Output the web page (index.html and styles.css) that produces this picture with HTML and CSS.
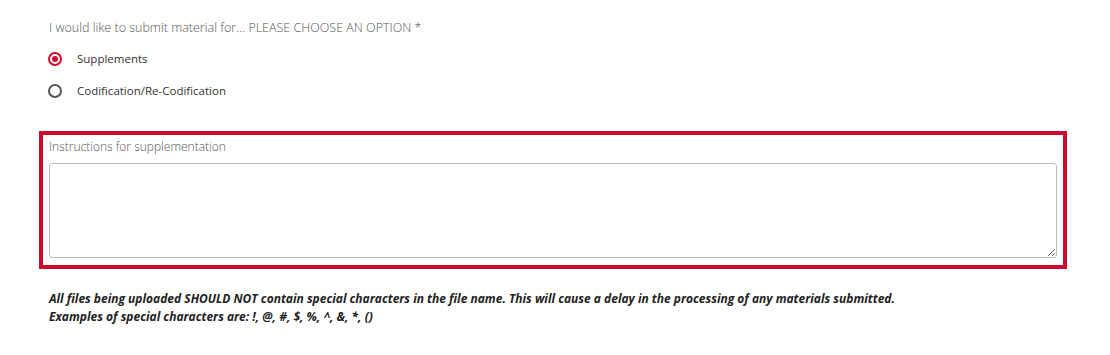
FILE: index.html
```html
<!DOCTYPE html>
<html lang="en">
<head>
<meta charset="utf-8">
<title>Submit material</title>
<link rel="stylesheet" href="styles.css">
</head>
<body>
<form class="form">
  <div class="question" role="radiogroup" aria-labelledby="q-title">
    <div class="question-title" id="q-title">I would like to submit material for... PLEASE CHOOSE AN OPTION *</div>
    <label class="option">
      <input class="radio" type="radio" name="material" checked>
      <span class="option-text">Supplements</span>
    </label>
    <label class="option">
      <input class="radio" type="radio" name="material">
      <span class="option-text">Codification/Re-Codification</span>
    </label>
  </div>
  <div class="field highlighted">
    <label class="field-label" for="instr">Instructions for supplementation</label>
    <textarea id="instr" class="textarea"></textarea>
  </div>
  <p class="notice">All files being uploaded SHOULD NOT contain special characters in the file name. This will cause a delay in the processing of any materials submitted.<br>Examples of special characters are: !, @, #, $, %, ^, &amp;, *, ()</p>
</form>
</body>
</html>
```

FILE: styles.css
```css
html, body {
  margin: 0;
  padding: 0;
  background: #ffffff;
}

body {
  font-family: "Open Sans", "Noto Sans", sans-serif;
  color: #333333;
}

.form {
  margin: 0 43px 0 39px;
  padding-top: 18px;
}

.question {
  padding: 0 10px;
}

.question-title {
  margin-bottom: 5px;
  font-size: 12.5px;
  font-weight: 300;
  line-height: 20px;
  color: #555555;
}

.option {
  display: flex;
  align-items: center;
  height: 32px;
}

.radio {
  appearance: none;
  -webkit-appearance: none;
  box-sizing: border-box;
  width: 14px;
  height: 14px;
  margin: 0 0 0 -1px;
  border: 2px solid #555555;
  border-radius: 50%;
  display: grid;
  place-items: center;
  flex: none;
}

.radio:checked {
  border-color: #cf0a2c;
}

.radio:checked::after {
  content: "";
  width: 6px;
  height: 6px;
  border-radius: 50%;
  background: #cf0a2c;
}

.option-text {
  margin-left: 15px;
  font-size: 11.5px;
  line-height: 20px;
  color: #333333;
}

.field {
  margin-top: 24px;
  display: flex;
  flex-direction: column;
}

.highlighted {
  border: 4px solid #cf0a2c;
  padding: 2px 6px 7px 6px;
}

.field-label {
  font-size: 12px;
  font-weight: 300;
  line-height: 20px;
  color: #555555;
}

.textarea {
  margin-top: 6px;
  box-sizing: border-box;
  height: 95px;
  border: 1px solid #bbbbbb;
  border-radius: 3px;
  font-family: inherit;
  font-size: 12px;
}

.notice {
  margin: 21px 0 0 10px;
  font-size: 12px;
  font-weight: 700;
  font-style: italic;
  line-height: 18px;
  color: #222222;
}
```
